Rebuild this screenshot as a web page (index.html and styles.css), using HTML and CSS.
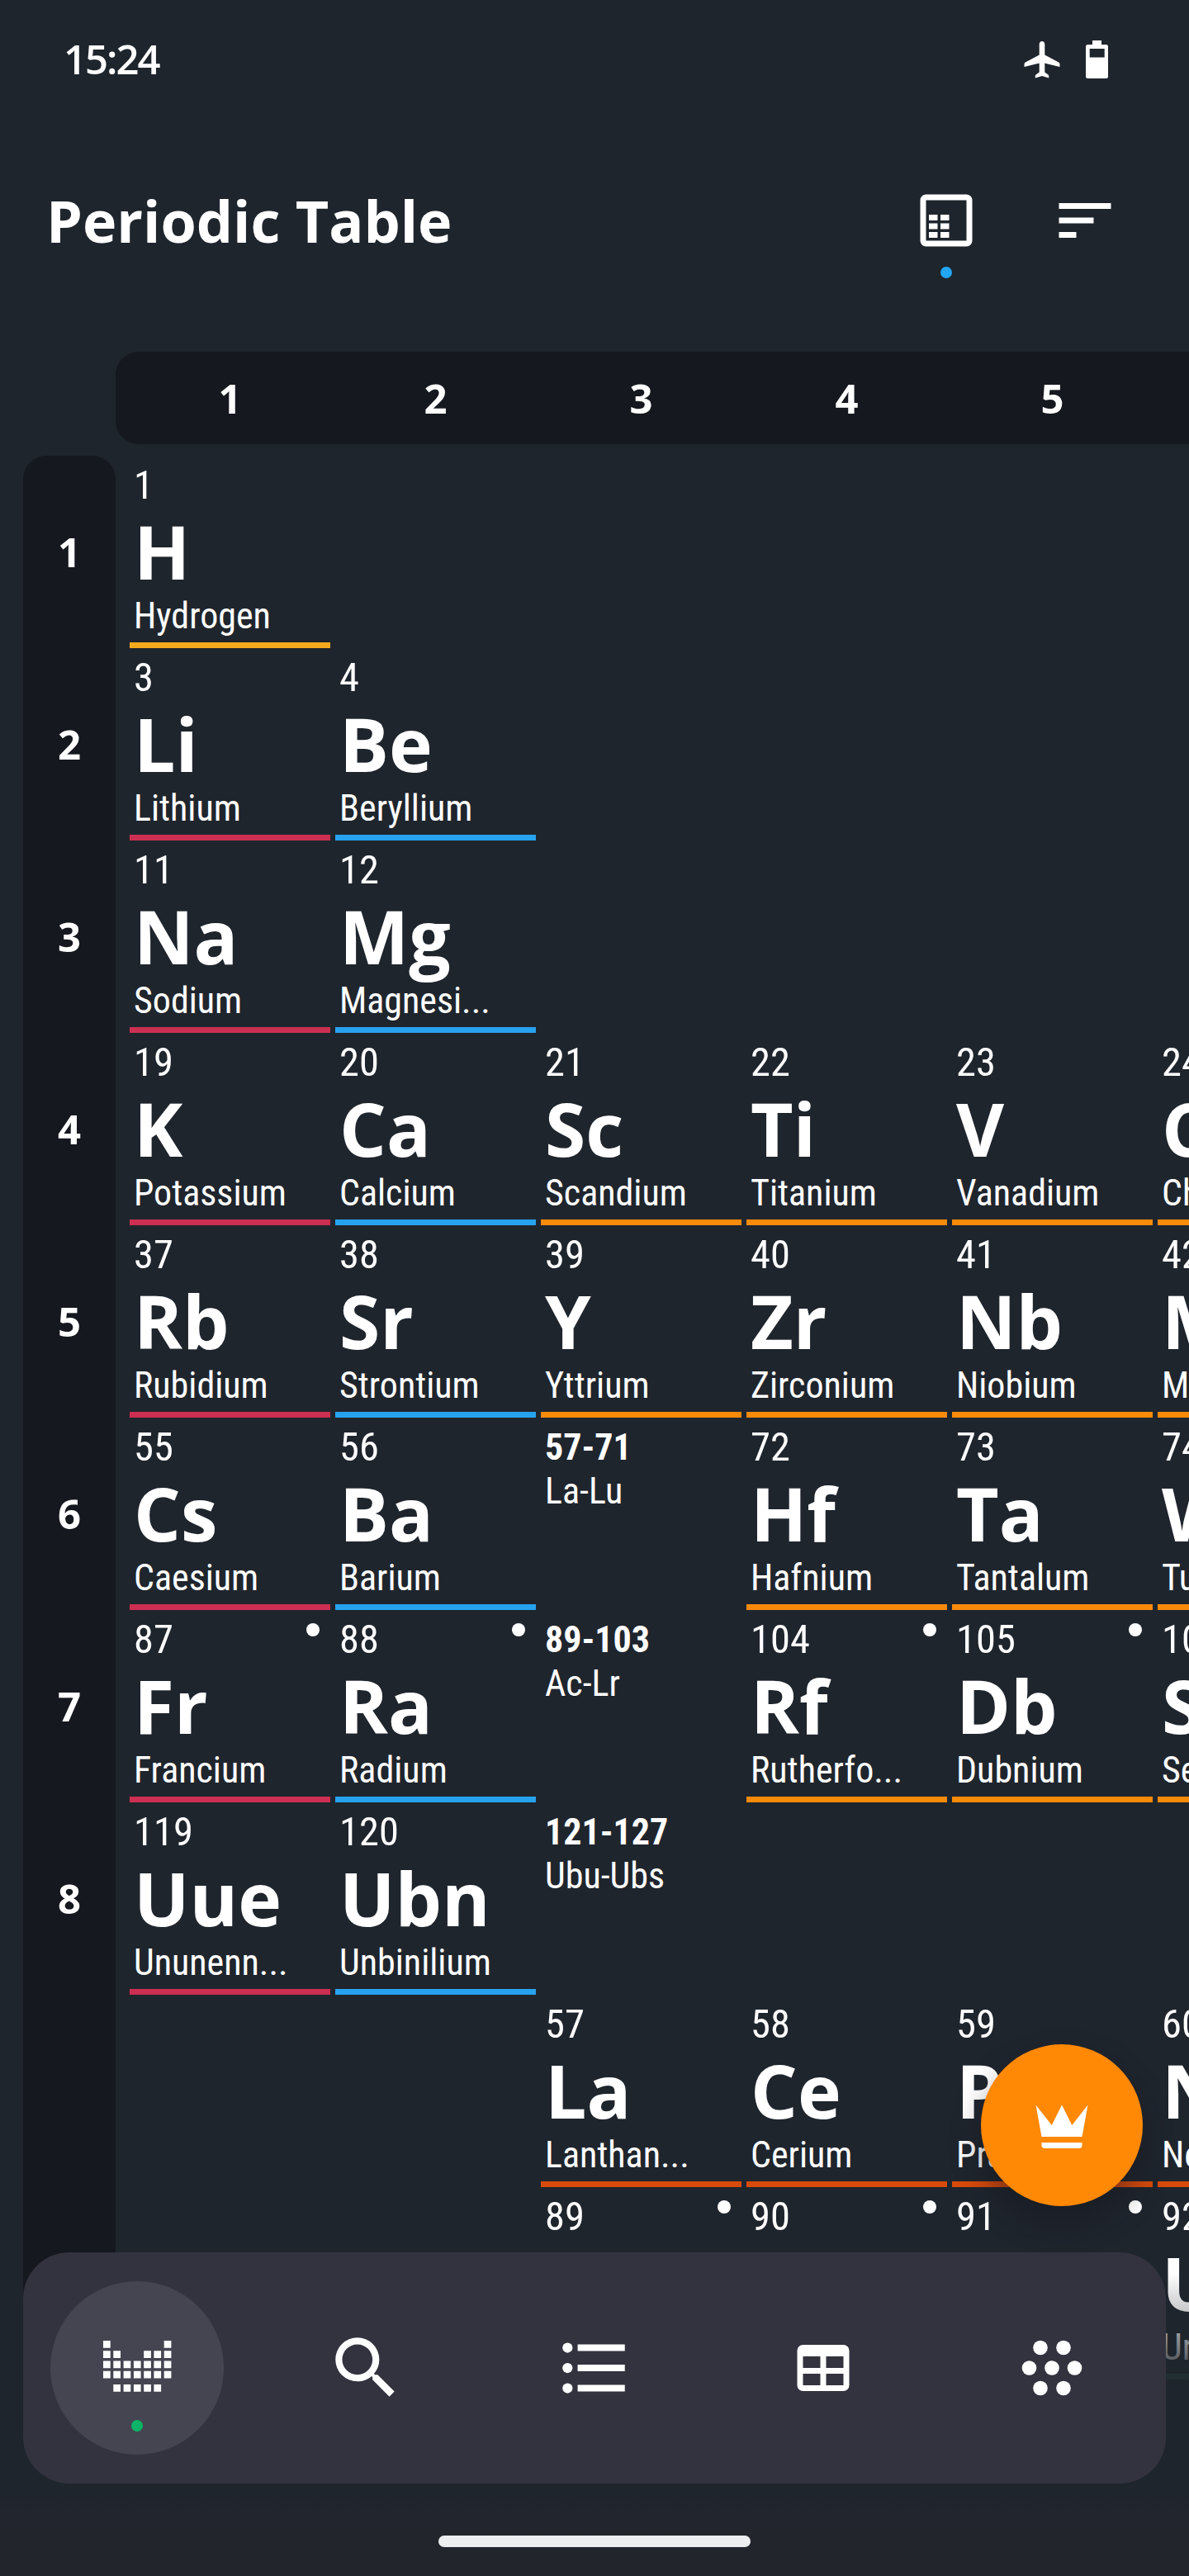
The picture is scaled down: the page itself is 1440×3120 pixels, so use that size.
FILE: index.html
```html
<!DOCTYPE html>
<html lang="en">
<head>
<meta charset="utf-8">
<title>Periodic Table</title>
<link rel="stylesheet" href="styles.css">
</head>
<body>
<div class="screen">
  <div class="statusbar">
    <span class="clock">15:24</span>
    <svg class="plane" viewBox="0 0 44 46" width="44" height="46"><path d="M22 1c-2 0-3.300 1.600-3.300 3.600V17.500L1.800 26.500Q.5 27.300.5 29v3L18.700 27.500V38.500L14.500 41.500Q13.800 42 13.800 43V45.500L22 43L30.200 45.500V43Q30.200 42 29.500 41.500L25.300 38.500V27.500L43.500 32V29Q43.500 27.300 42.200 26.500L25.300 17.500V4.600C25.300 2.600 24 1 22 1Z"/></svg>
    <svg class="battery" viewBox="0 0 27 46" width="27" height="46"><path fill-rule="evenodd" d="M8 0H19V5H24.500Q27 5 27 7.500V43.500Q27 46 24.500 46H2.500Q0 46 0 43.500V7.500Q0 5 2.500 5H8ZM4.700 10V20.500H22.700V10Z"/></svg>
  </div>

  <header class="appbar">
    <h1 class="title">Periodic Table</h1>
    <button class="action">
      <svg viewBox="0 0 24 24" width="84" height="84"><path fill-rule="evenodd" d="M5 3H19A2 2 0 0 1 21 5V19A2 2 0 0 1 19 21H5A2 2 0 0 1 3 19V5A2 2 0 0 1 5 3ZM5 5V19H19V5ZM6 10h3v2H6ZM10 10h3v2h-3ZM6 13h3v2H6ZM10 13h3v2h-3ZM6 16h3v2H6ZM10 16h3v2h-3Z"/></svg>
      <i class="dot dot-blue"></i>
    </button>
    <button class="action">
      <svg viewBox="0 0 24 24" width="84" height="84"><path d="M3 6H21V8H3ZM3 11H15V13H3ZM3 16H9V18H3Z"/></svg>
    </button>
  </header>

  <div class="groups"><span>1</span><span>2</span><span>3</span><span>4</span><span>5</span></div>

  <main class="board">
    <div class="periods"><span>1</span><span>2</span><span>3</span><span>4</span><span>5</span><span>6</span><span>7</span><span>8</span></div>
    <div class="table">
      <div class="row">
        <div class="el nonmetal"><span class="num">1</span><b class="sym">H</b><span class="name">Hydrogen</span></div>
      </div>
      <div class="row">
        <div class="el alkali"><span class="num">3</span><b class="sym">Li</b><span class="name">Lithium</span></div>
        <div class="el earth"><span class="num">4</span><b class="sym">Be</b><span class="name">Beryllium</span></div>
      </div>
      <div class="row">
        <div class="el alkali"><span class="num">11</span><b class="sym">Na</b><span class="name">Sodium</span></div>
        <div class="el earth"><span class="num">12</span><b class="sym">Mg</b><span class="name">Magnesi...</span></div>
      </div>
      <div class="row">
        <div class="el alkali"><span class="num">19</span><b class="sym">K</b><span class="name">Potassium</span></div>
        <div class="el earth"><span class="num">20</span><b class="sym">Ca</b><span class="name">Calcium</span></div>
        <div class="el transition"><span class="num">21</span><b class="sym">Sc</b><span class="name">Scandium</span></div>
        <div class="el transition"><span class="num">22</span><b class="sym">Ti</b><span class="name">Titanium</span></div>
        <div class="el transition"><span class="num">23</span><b class="sym">V</b><span class="name">Vanadium</span></div>
        <div class="el transition"><span class="num">24</span><b class="sym">Cr</b><span class="name">Chromium</span></div>
      </div>
      <div class="row">
        <div class="el alkali"><span class="num">37</span><b class="sym">Rb</b><span class="name">Rubidium</span></div>
        <div class="el earth"><span class="num">38</span><b class="sym">Sr</b><span class="name">Strontium</span></div>
        <div class="el transition"><span class="num">39</span><b class="sym">Y</b><span class="name">Yttrium</span></div>
        <div class="el transition"><span class="num">40</span><b class="sym">Zr</b><span class="name">Zirconium</span></div>
        <div class="el transition"><span class="num">41</span><b class="sym">Nb</b><span class="name">Niobium</span></div>
        <div class="el transition"><span class="num">42</span><b class="sym">Mo</b><span class="name">Molybde...</span></div>
      </div>
      <div class="row">
        <div class="el alkali"><span class="num">55</span><b class="sym">Cs</b><span class="name">Caesium</span></div>
        <div class="el earth"><span class="num">56</span><b class="sym">Ba</b><span class="name">Barium</span></div>
        <div class="range"><b>57-71</b><span>La-Lu</span></div>
        <div class="el transition"><span class="num">72</span><b class="sym">Hf</b><span class="name">Hafnium</span></div>
        <div class="el transition"><span class="num">73</span><b class="sym">Ta</b><span class="name">Tantalum</span></div>
        <div class="el transition"><span class="num">74</span><b class="sym">W</b><span class="name">Tungsten</span></div>
      </div>
      <div class="row">
        <div class="el alkali radioactive"><span class="num">87</span><b class="sym">Fr</b><span class="name">Francium</span></div>
        <div class="el earth radioactive"><span class="num">88</span><b class="sym">Ra</b><span class="name">Radium</span></div>
        <div class="range"><b>89-103</b><span>Ac-Lr</span></div>
        <div class="el transition radioactive"><span class="num">104</span><b class="sym">Rf</b><span class="name">Rutherfo...</span></div>
        <div class="el transition radioactive"><span class="num">105</span><b class="sym">Db</b><span class="name">Dubnium</span></div>
        <div class="el transition radioactive"><span class="num">106</span><b class="sym">Sg</b><span class="name">Seaborgi...</span></div>
      </div>
      <div class="row">
        <div class="el alkali"><span class="num">119</span><b class="sym">Uue</b><span class="name">Ununenn...</span></div>
        <div class="el earth"><span class="num">120</span><b class="sym">Ubn</b><span class="name">Unbinilium</span></div>
        <div class="range"><b>121-127</b><span>Ubu-Ubs</span></div>
      </div>
      <div class="row">
        <div class="el lanthanide from-3"><span class="num">57</span><b class="sym">La</b><span class="name">Lanthan...</span></div>
        <div class="el lanthanide"><span class="num">58</span><b class="sym">Ce</b><span class="name">Cerium</span></div>
        <div class="el lanthanide"><span class="num">59</span><b class="sym">Pr</b><span class="name">Praseod...</span></div>
        <div class="el lanthanide"><span class="num">60</span><b class="sym">Nd</b><span class="name">Neodymi...</span></div>
      </div>
      <div class="row">
        <div class="el actinide radioactive from-3"><span class="num">89</span></div>
        <div class="el actinide radioactive"><span class="num">90</span></div>
        <div class="el actinide radioactive"><span class="num">91</span></div>
        <div class="el actinide radioactive"><span class="num">92</span><b class="sym">U</b><span class="name">Uranium</span></div>
      </div>
    </div>
  </main>

  <div class="fade"></div>

  <button class="fab">
    <svg viewBox="0 0 24 24" width="84" height="84"><path d="M5 16L3 5L8.500 12L12 5L15.500 12L21 5L19 16H5M19 19C19 19.600 18.600 20 18 20H6C5.400 20 5 19.600 5 19V18H19V19Z"/></svg>
  </button>

  <nav class="navbar">
    <a class="tab">
      <span class="selected">
        <svg viewBox="0 0 84 84" width="84" height="84"><path d="M1 9h8.700v8.700H1ZM74.700 9h8.700v8.700h-8.700ZM1 21.300h8.700V30H1ZM13.300 21.300H22V30h-8.700ZM50.200 21.300h8.700V30h-8.700ZM62.400 21.300h8.700V30h-8.700ZM74.700 21.300h8.700V30h-8.700ZM1 33.500h8.700v8.700H1ZM13.300 33.500H22v8.700h-8.700ZM25.600 33.500h8.700v8.700h-8.700ZM37.900 33.500h8.700v8.700h-8.700ZM50.200 33.500h8.700v8.700h-8.700ZM62.400 33.500h8.700v8.700h-8.700ZM74.700 33.500h8.700v8.700h-8.700ZM1 45.800h8.700v8.700H1ZM13.300 45.800H22v8.700h-8.700ZM25.600 45.800h8.700v8.700h-8.700ZM37.900 45.800h8.700v8.700h-8.700ZM50.200 45.800h8.700v8.700h-8.700ZM62.400 45.800h8.700v8.700h-8.700ZM74.700 45.800h8.700v8.700h-8.700ZM13.300 62H22v8.700h-8.700ZM25.600 62h8.700v8.700h-8.700ZM37.900 62h8.700v8.700h-8.700ZM50.200 62h8.700v8.700h-8.700ZM62.400 62h8.700v8.700h-8.700Z"/></svg>
        <i class="dot dot-green"></i>
      </span>
    </a>
    <a class="tab"><svg viewBox="0 0 24 24" width="98" height="98"><path d="M15.500 14h-.79l-.28-.27A6.471 6.471 0 0 0 16 9.500 6.500 6.500 0 1 0 9.500 16c1.610 0 3.090-.59 4.230-1.570l.27.28v.79l5 4.990L20.490 19l-4.990-5zm-6 0C7.010 14 5 11.990 5 9.500S7.010 5 9.500 5 14 7.010 14 9.500 11.990 14 9.500 14z"/></svg></a>
    <a class="tab"><svg viewBox="0 0 24 24" width="98" height="98"><circle cx="4" cy="6" r="1.500"/><circle cx="4" cy="12" r="1.500"/><circle cx="4" cy="18" r="1.500"/><path d="M7 5H21V7H7ZM7 11H21V13H7ZM7 17H21V19H7Z"/></svg></a>
    <a class="tab"><svg viewBox="0 0 24 24" width="84" height="84"><path d="M5 4H19A2 2 0 0 1 21 6V18A2 2 0 0 1 19 20H5A2 2 0 0 1 3 18V6A2 2 0 0 1 5 4M5 8V12H11V8H5M13 8V12H19V8H13M5 14V18H11V14H5M13 14V18H19V14H13Z" fill-rule="evenodd"/></svg></a>
    <a class="tab"><svg viewBox="0 0 84 84" width="84" height="84"><circle cx="14.500" cy="42" r="8.800"/><circle cx="42" cy="42" r="8.800"/><circle cx="69.500" cy="42" r="8.800"/><circle cx="28" cy="17.500" r="8.800"/><circle cx="56" cy="17.500" r="8.800"/><circle cx="28" cy="66.500" r="8.800"/><circle cx="56" cy="66.500" r="8.800"/></svg></a>
  </nav>
  <div class="homebar"></div>
</div>
</body>
</html>
```
FILE: styles.css
```css
* { box-sizing: border-box; }
body { margin: 0; background: #1f252d; }
button { border: 0; padding: 0; background: none; }
svg { display: block; fill: #fff; }

.screen {
  position: relative;
  width: 1440px;
  height: 3120px;
  overflow: hidden;
  display: flex;
  flex-direction: column;
  background: #1f252d;
  color: #fff;
  font-family: "Open Sans", "Noto Sans", sans-serif;
}

.statusbar {
  height: 144px;
  padding: 0 98px 0 77px;
  display: flex;
  align-items: center;
}
.clock {
  flex: 1;
  padding-bottom: 3px;
  font-size: 49px;
  font-weight: 600;
  line-height: 66px;
  letter-spacing: -2px;
}
.battery { margin-left: 31px; }

.appbar {
  height: 246px;
  padding: 0 84px 0 56px;
  display: flex;
  align-items: center;
}
.title {
  flex: 1;
  margin: 0;
  font-size: 70px;
  font-weight: 700;
  line-height: 96px;
  font-kerning: none;
}
.action { position: relative; margin-left: 84px; }
.dot { position: absolute; width: 14px; height: 14px; border-radius: 50%; }
.dot-blue { left: 35px; top: 98px; background: #22a5f5; }
.dot-green { left: 98px; top: 168px; background: #0bb565; }

.groups {
  width: 1540px;
  height: 112px;
  margin: 36px 0 14px 140px;
  padding-left: 17px;
  display: grid;
  grid-template-columns: repeat(6, 243px);
  gap: 6px;
  align-items: center;
  text-align: center;
  border-radius: 28px;
  background: #15181e;
  font-size: 49px;
  font-weight: 700;
}

.board { display: flex; gap: 17px; padding-left: 28px; }
.periods {
  flex: none;
  width: 112px;
  height: 2400px;
  border-radius: 28px;
  background: #15181e;
  font-size: 49px;
  font-weight: 700;
  text-align: center;
}
.periods span { display: block; height: 233px; line-height: 233px; }

.row {
  display: grid;
  grid-template-columns: repeat(6, 243px);
  column-gap: 6px;
  height: 233px;
}
.el {
  position: relative;
  display: flex;
  flex-direction: column;
  padding-left: 5px;
  border-bottom: 7px solid;
  white-space: nowrap;
}
.from-3 { grid-column-start: 3; }
.num, .name, .range { font-family: "Roboto Condensed", Roboto, sans-serif; font-stretch: 75%; }
.num { font-size: 48.5px; line-height: 71px; color: #fff; }
.sym { font-size: 89.3px; line-height: 89px; color: #fff; font-kerning: none; }
.name { font-size: 44px; line-height: 66px; padding-top: 1px; margin-bottom: -1px; color: #fff; }
.radioactive::after {
  content: "";
  position: absolute;
  top: 16px;
  right: 13px;
  width: 16px;
  height: 16px;
  border-radius: 50%;
  background: #fff;
}
.nonmetal { border-color: #f5aa1c; }
.alkali { border-color: #cc2f51; }
.earth { border-color: #27a2ef; }
.transition { border-color: #fa8a0a; }
.lanthanide { border-color: #d84b0b; }
.actinide { border-color: #3c9a52; }
.range {
  display: flex;
  flex-direction: column;
  padding: 10px 0 0 5px;
  font-size: 44px;
  line-height: 53px;
}

.fade {
  position: absolute;
  left: 0;
  right: 0;
  top: 2728px;
  bottom: 0;
  background: linear-gradient(rgba(31, 37, 45, 0), rgba(31, 37, 45, 0) 25px, rgba(31, 37, 45, .25) 72px, rgba(31, 37, 45, .57) 112px, rgba(31, 37, 45, .92) 150px, #1f252d 175px, #1f252d 285px, #23252d 340px);
}

.fab {
  position: absolute;
  left: 1188px;
  top: 2476px;
  width: 196px;
  height: 196px;
  display: flex;
  align-items: center;
  justify-content: center;
  border-radius: 50%;
  background: #ff8805;
  box-shadow: 0 20px 36px rgba(20, 20, 28, .45);
}

.navbar {
  position: absolute;
  left: 28px;
  right: 28px;
  top: 2728px;
  height: 280px;
  display: flex;
  border-radius: 56px;
  background: #32333e;
}
.tab { flex: 1; display: flex; align-items: center; justify-content: center; }
.selected {
  position: relative;
  width: 210px;
  height: 210px;
  display: flex;
  align-items: center;
  justify-content: center;
  border-radius: 50%;
  background: #444550;
}
.homebar {
  position: absolute;
  left: 531px;
  top: 3071px;
  width: 378px;
  height: 14px;
  border-radius: 7px;
  background: #edeef0;
}
```
